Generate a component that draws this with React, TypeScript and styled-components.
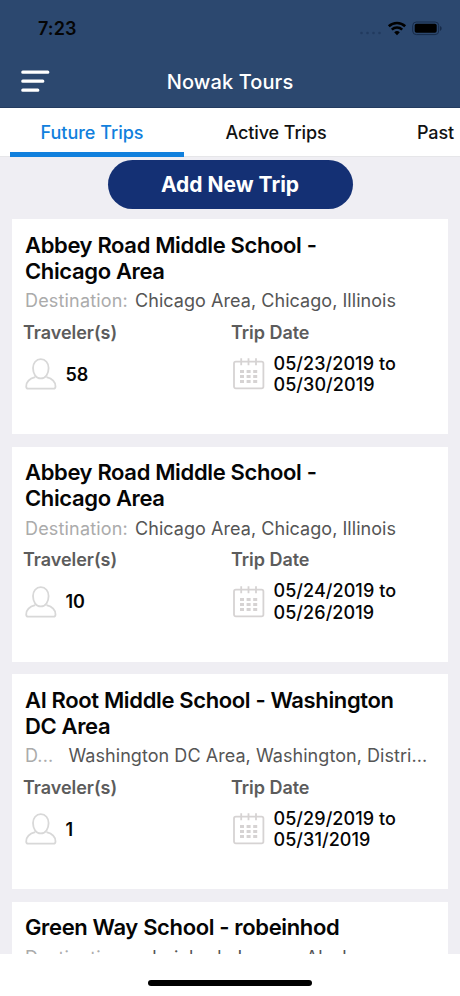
import React from "react";
import styled, { createGlobalStyle } from "styled-components";

const Global = createGlobalStyle`
  * { box-sizing: border-box; }
  body { margin: 0; background: #fff; font-family: Inter, "Liberation Sans", sans-serif; }
`;
const Screen = styled.div`
  width: 460px; height: 996px; overflow: hidden; display: flex; flex-direction: column; background: #fff; color: #050505;
`;
const Header = styled.header`
  height: 108px; flex: none; background: #2c486f; border-bottom: 1px solid #243c60;
`;
const StatusBar = styled.div`
  height: 56px; padding: 0 18px 0 38px; display: flex; justify-content: space-between; align-items: center;
`;
const Time = styled.span`
  font-size: 18px; font-weight: 600; letter-spacing: 0.1px;
`;
const NavBar = styled.div`
  height: 51px; display: grid; grid-template-columns: 60px 1fr 60px; align-items: center; padding: 0 21px;
`;
const NavTitle = styled.h1`
  margin: 0; text-align: center; color: #fff; font-size: 20px; font-weight: 500; letter-spacing: 0.1px;
`;
const Tabs = styled.nav`
  height: 49px; flex: none; display: flex; gap: 10px; padding-left: 10px; background: #fff; overflow: hidden;
  box-shadow: inset 0 -1px #e6e6e9;
`;
const Tab = styled.div<{ $active?: boolean; $width: number }>`
  width: ${(p) => p.$width}px; flex: none; height: 49px; padding: 13px 10px 0 0; line-height: 24px; text-align: center; white-space: nowrap;
  font-size: 18px; font-weight: 500; letter-spacing: ${(p) => (p.$active ? 0 : -0.1)}px;
  color: ${(p) => (p.$active ? "#1180dd" : "#111")};
  border-bottom: 5px solid ${(p) => (p.$active ? "#1180dd" : "transparent")};
`;
const List = styled.main`
  height: 797px; flex: none; overflow: hidden; background: #efeef3; padding: 3px 12px 0; display: flex; flex-direction: column; align-items: center;
`;
const AddButton = styled.button`
  width: 245px; height: 49px; flex: none; border: 0; border-radius: 25px; background: #143074; color: #fff; margin-bottom: 10px; padding: 0;
  font: 700 21px Inter, sans-serif;
`;
const Card = styled.article`
  width: 436px; height: 215px; flex: none; background: #fff; margin-bottom: 12.5px; padding: 12.5px 13px 0;
`;
const Title = styled.h2`
  margin: 0; font-size: 22px; line-height: 26px; font-weight: 600; letter-spacing: -0.36px; white-space: pre-line;
`;
const Destination = styled.div`
  display: flex; height: 31px; align-items: center; padding-top: 4.5px; font-size: 18px; line-height: 22px; white-space: nowrap;
`;
const DestLabel = styled.span<{ $short?: boolean }>`
  width: ${(p) => (p.$short ? 43.5 : 110)}px; flex: none; color: #ababab; letter-spacing: 0.17px;
`;
const DestValue = styled.span`
  color: #555; letter-spacing: 0.05px;
`;
const Details = styled.div`
  display: grid; grid-template-columns: 208px 1fr; margin: 2px 0 0 -2px;
`;
const DetailLabel = styled.div`
  height: 32px; line-height: 32px; font-size: 18px; font-weight: 600; color: #5c5c5c; letter-spacing: -0.04px;
`;
const DetailRow = styled.div`
  height: 51px; display: flex; align-items: center; gap: 7.5px; padding-left: 1px;
`;
const Count = styled.span`
  font-size: 18px; font-weight: 600;
`;
const Dates = styled.div`
  font-size: 18px; font-weight: 500; line-height: 21.5px; letter-spacing: 0.06px; white-space: pre-line;
`;
const Footer = styled.footer`
  flex: 1; display: flex; justify-content: center; padding-top: 26px;
`;
const HomeBar = styled.div`
  width: 164px; height: 6px; border-radius: 3px; background: #000;
`;

const StatusIcons = () => (
  <svg width="82" height="20" viewBox="0 0 82 20">
    <g fill="#213a5e"><circle cx="1.5" cy="15" r="1.3"/><circle cx="7.5" cy="15" r="1.3"/><circle cx="13.5" cy="15" r="1.3"/><circle cx="19.5" cy="15" r="1.3"/></g>
    <g fill="none" stroke="#000" strokeWidth="2.6"><path d="M28.8 8.2a12 12 0 0 1 16.4 0M31.8 11.6a7.6 7.6 0 0 1 10.4 0"/></g>
    <path d="M37 17.2l-2.8-2.9a4 4 0 0 1 5.6 0z"/>
    <rect x="52.7" y="4" width="26" height="12.6" rx="3.6" fill="none" stroke="#172b49"/>
    <rect x="54.7" y="5.8" width="22" height="9" rx="1.8"/><path d="M80 8.1c2.2.8 2.2 3.8 0 4.6z" fill="#172b49"/>
  </svg>
);
const MenuIcon = () => (
  <svg width="29" height="23" viewBox="0 0 29 23" stroke="#fff" strokeWidth="3.2" strokeLinecap="round">
    <path d="M1.8 2.2h25M1.8 11.2h20M1.8 20.2h15"/>
  </svg>
);
const Person = () => (
  <svg width="34" height="34" viewBox="0 0 34 34" fill="none" stroke="#d8d8d8" strokeWidth="1.8" strokeLinejoin="round">
    <path d="M16.8 2.2c-4.7 0-7.8 3.8-7.8 8.9 0 5.8 3 10.3 7.8 10.3s7.8-4.5 7.8-10.3c0-5.1-3.1-8.9-7.8-8.9z"/>
    <path d="M11.2 20.2C6 21.6 2.2 24.4 2.2 29.5c0 1.6.6 2.2 1.9 2.2h25.5c1.3 0 1.9-.6 1.9-2.2 0-5.1-3.8-7.9-9-9.3"/>
  </svg>
);
const Calendar = () => (
  <svg width="34" height="34" viewBox="0 0 34 34" fill="none" stroke="#d6d3d3" strokeWidth="1.8">
    <rect x="2" y="4.7" width="29.4" height="26.6" rx="1.8"/>
    <path d="M9.2 1.3v7M16.5 1.3v7M24 1.3v7"/>
    <path d="M8 14.5h17.5M8 19.5h17.5M8 24.5h17.5" strokeWidth="2.8" strokeDasharray="4 2.6"/>
  </svg>
);

type Trip = { title: string; label: string; place: string; count: string; dates: string };
const trips: Trip[] = [
  { title: "Abbey Road Middle School -\nChicago Area", label: "Destination:", place: "Chicago Area, Chicago, Illinois", count: "58", dates: "05/23/2019 to\n05/30/2019" },
  { title: "Abbey Road Middle School -\nChicago Area", label: "Destination:", place: "Chicago Area, Chicago, Illinois", count: "10", dates: "05/24/2019 to\n05/26/2019" },
  { title: "AI Root Middle School - Washington\nDC Area", label: "D...", place: "Washington DC Area, Washington, Distri...", count: "1", dates: "05/29/2019 to\n05/31/2019" },
];

const TripHeading = ({ title, label, place }: Pick<Trip, "title" | "label" | "place">) => (
  <>
    <Title>{title}</Title>
    <Destination><DestLabel $short={label === "D..."}>{label}</DestLabel><DestValue>{place}</DestValue></Destination>
  </>
);

const TripCard = ({ trip }: { trip: Trip }) => (
  <Card>
    <TripHeading title={trip.title} label={trip.label} place={trip.place} />
    <Details>
      <DetailLabel>Traveler(s)</DetailLabel><DetailLabel>Trip Date</DetailLabel>
      <DetailRow><Person /><Count>{trip.count}</Count></DetailRow>
      <DetailRow><Calendar /><Dates>{trip.dates}</Dates></DetailRow>
    </Details>
  </Card>
);

export default function App() {
  return (
    <Screen>
      <Global />
      <Header>
        <StatusBar><Time>7:23</Time><StatusIcons /></StatusBar>
        <NavBar><MenuIcon /><NavTitle>Nowak Tours</NavTitle></NavBar>
      </Header>
      <Tabs><Tab $active $width={174}>Future Trips</Tab><Tab $width={174}>Active Trips</Tab><Tab $width={125}>Past</Tab></Tabs>
      <List>
        <AddButton>Add New Trip</AddButton>
        {trips.map((t, i) => <TripCard key={i} trip={t} />)}
        <Card><TripHeading title="Green Way School - robeinhod" label="Destination:" place="robeinhod, Juneau, Alaska" /></Card>
      </List>
      <Footer><HomeBar /></Footer>
    </Screen>
  );
}
